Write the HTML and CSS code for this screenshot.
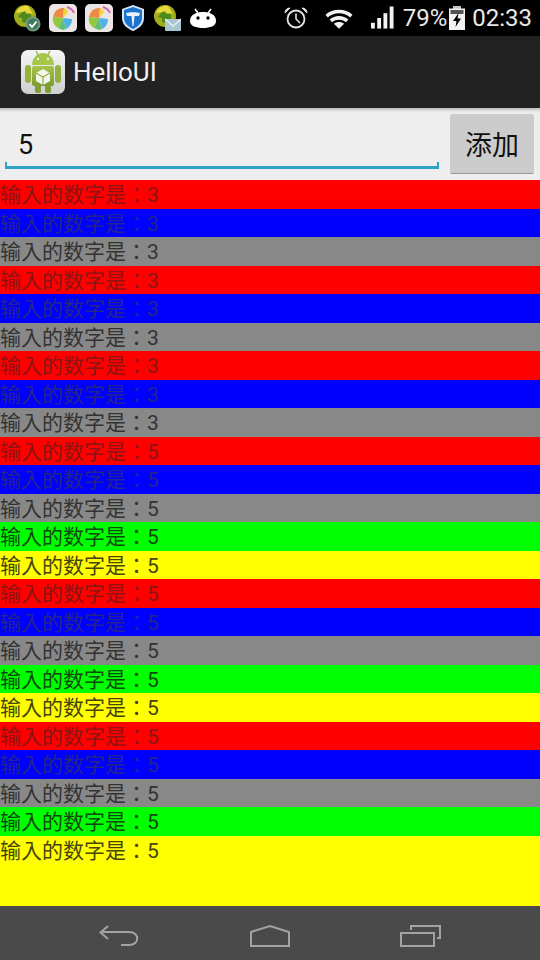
FILE: index.html
```html
<!DOCTYPE html>
<html>
<head>
	<title>HelloUI</title>
	<link rel="stylesheet" href="styles.css">
</head>
<body>
	<div class="status">
		<div class="status-left">
			<svg class="note" width="28" height="28" viewBox="0 0 28 28">
				<circle cx="12" cy="12" r="11" fill="#a2ad1e"/>
				<path d="M3 9 C5 3 11 1 15 2 L20 10 L10 8 Z" fill="#e9d83a"/>
				<path d="M8 9 L12 7 L13 10 L18 10 L18 15 L14 15 L13 19 L9 18 L9 14 L5 13 Z" fill="#4d8a1c"/>
				<circle cx="20" cy="20" r="7.5" fill="#6f9a80"/>
				<circle cx="20" cy="20" r="5.5" fill="#3f7a5c"/>
				<path d="M16.5 20 L19 23 L23.5 17.5" fill="none" stroke="#fff" stroke-width="1.8"/>
			</svg>
			<svg class="note" width="28" height="28" viewBox="0 0 28 28">
				<rect width="28" height="28" rx="5" fill="#ebe6e4"/>
				<path d="M4 13 A10 10 0 0 1 15 4 L14 14 Z" fill="#ee8a45"/>
				<path d="M15 4 C18 5 19 7 19 8 L14 14 Z" fill="#f2d33c"/>
				<path d="M4 13 L14 14 L9 24 A10 10 0 0 1 4 13 Z" fill="#93c83e"/>
				<path d="M14 14 L9 24 L14 26 L17 25 Z" fill="#63bf78"/>
				<path d="M14 14 L17 25 C21 23 23 19 23 15 Z" fill="#4db3e6"/>
				<path d="M18 3 C21 4 24 6 25 9" fill="none" stroke="#d668b4" stroke-width="2"/>
			</svg>
			<svg class="note" width="28" height="28" viewBox="0 0 28 28">
				<rect width="28" height="28" rx="5" fill="#ebe6e4"/>
				<path d="M4 13 A10 10 0 0 1 15 4 L14 14 Z" fill="#ee8a45"/>
				<path d="M15 4 C18 5 19 7 19 8 L14 14 Z" fill="#f2d33c"/>
				<path d="M4 13 L14 14 L9 24 A10 10 0 0 1 4 13 Z" fill="#93c83e"/>
				<path d="M14 14 L9 24 L14 26 L17 25 Z" fill="#63bf78"/>
				<path d="M14 14 L17 25 C21 23 23 19 23 15 Z" fill="#4db3e6"/>
				<path d="M18 3 C21 4 24 6 25 9" fill="none" stroke="#d668b4" stroke-width="2"/>
			</svg>
			<svg class="note" width="24" height="28" viewBox="0 0 24 28">
				<path d="M12 1 L23 5 L23 14 C23 21 17 25 12 27 C7 25 1 21 1 14 L1 5 Z" fill="#d5e6f5"/>
				<path d="M12 3 L21 6 L21 14 C21 20 16 23 12 25 C8 23 3 20 3 14 L3 6 Z" fill="#1c74d0"/>
				<path d="M5 9 C9 8 15 8 19 9 L18 12 L13.5 12 L12.5 22 L11.5 22 L10.5 12 L6 12 Z" fill="#e8f2fb"/>
			</svg>
			<svg class="note" width="28" height="28" viewBox="0 0 28 28">
				<circle cx="12" cy="12" r="11" fill="#a2ad1e"/>
				<path d="M3 9 C5 3 11 1 15 2 L20 10 L10 8 Z" fill="#e9d83a"/>
				<path d="M8 9 L12 7 L13 10 L18 10 L18 15 L14 15 L13 19 L9 18 L9 14 L5 13 Z" fill="#4d8a1c"/>
				<rect x="12" y="15" width="16" height="12" rx="1" fill="#a9c6d2"/>
				<path d="M12 15 L20 22 L28 15" fill="none" stroke="#e6eef2" stroke-width="1.4"/>
			</svg>
			<svg class="note" width="28" height="28" viewBox="0 0 28 28">
				<path d="M6 5 L9 9 M22 5 L19 9" stroke="#fff" stroke-width="1.6"/>
				<path d="M1 17 C1 10 8 8 14 8 C20 8 27 10 27 17 C27 22 21 24 14 24 C7 24 1 22 1 17 Z" fill="#fff"/>
				<circle cx="9" cy="14" r="1.7" fill="#000"/>
				<circle cx="19" cy="14" r="1.7" fill="#000"/>
			</svg>
		</div>
		<div class="status-right">
			<svg class="alarm" width="26" height="24" viewBox="0 0 26 24" fill="none" stroke="#e4e4e4">
				<circle cx="13" cy="13" r="8.5" stroke-width="1.8"/>
				<path d="M13 7.5 L13 13 L17 17" stroke-width="1.6"/>
				<path d="M2 7 C2 4 4 2 7 2 Z M24 7 C24 4 22 2 19 2 Z" fill="#e4e4e4" stroke-width="1"/>
			</svg>
			<svg class="wifi" width="28" height="21" viewBox="0 0 30 22">
				<path d="M0.5 7 C8 0 22 0 29.5 7 L27 10 C20 4 10 4 3 10 Z" fill="#f2f2f2"/>
				<path d="M5 12 C10 7 20 7 25 12 L22.5 15 C18.5 11.5 11.5 11.5 7.5 15 Z" fill="#f2f2f2"/>
				<path d="M9.5 16.5 C12.5 14 17.5 14 20.5 16.5 L15 22 Z" fill="#f2f2f2"/>
			</svg>
			<svg class="signal" width="23" height="24" viewBox="0 0 24 24">
				<rect x="0" y="17" width="4" height="6" fill="#f2f2f2"/>
				<rect x="6.5" y="12" width="4" height="11" fill="#f2f2f2"/>
				<rect x="13" y="7" width="4" height="16" fill="#f2f2f2"/>
				<rect x="19.5" y="0" width="4" height="23" fill="#f2f2f2"/>
			</svg>
			<span class="battery-pct">79%</span>
			<svg class="battery" width="16" height="24" viewBox="0 0 16 24">
				<rect x="4" y="0" width="8" height="3" fill="#c4c4c4"/>
				<rect x="0" y="2.5" width="16" height="21.5" fill="#f2f2f2"/>
				<rect x="1.5" y="4" width="13" height="4" fill="#555"/>
				<path d="M9.5 7 L4 15 L7.5 15 L6.5 21 L12 12.5 L8.5 12.5 Z" fill="#000"/>
			</svg>
			<span class="clock">02:33</span>
		</div>
	</div>

	<div class="actionbar">
		<svg class="app-icon" width="44" height="44" viewBox="0 0 44 44">
			<defs>
				<linearGradient id="tile" x1="0" y1="0" x2="0" y2="1">
					<stop offset="0" stop-color="#f6f6f6"/>
					<stop offset="1" stop-color="#cfcfcf"/>
				</linearGradient>
				<linearGradient id="robot" x1="0" y1="0" x2="0" y2="1">
					<stop offset="0" stop-color="#a6c64a"/>
					<stop offset="1" stop-color="#7d9c30"/>
				</linearGradient>
			</defs>
			<rect width="44" height="44" rx="7" fill="url(#tile)"/>
			<path d="M15 1 L18 6 M29 1 L26 6" stroke="#93b33e" stroke-width="1.4"/>
			<path d="M11 15 C11 8 16 3 22 3 C28 3 33 8 33 15 Z" fill="#a6c64a"/>
			<circle cx="17" cy="9" r="1.2" fill="#eee"/>
			<circle cx="27" cy="9" r="1.2" fill="#eee"/>
			<rect x="11" y="16" width="22" height="20" rx="2" fill="url(#robot)"/>
			<rect x="4" y="15" width="6" height="18" rx="3" fill="#93b33e"/>
			<rect x="34" y="15" width="6" height="18" rx="3" fill="#93b33e"/>
			<rect x="14" y="35" width="6" height="8" rx="2" fill="#7f9e34"/>
			<rect x="24" y="35" width="6" height="8" rx="2" fill="#7f9e34"/>
			<path d="M22 19 L29 23 L29 31 L22 35 L15 31 L15 23 Z" fill="#f5f5f0"/>
			<path d="M15 23 L22 27 L29 23 M22 27 L22 35" fill="none" stroke="#93b33e" stroke-width="1.2"/>
		</svg>
		<span class="app-title">HelloUI</span>
	</div>

	<div class="form">
		<div class="edit">5</div>
		<div class="add-btn">添加</div>
	</div>

	<div class="list">
		<div class="row red">输入的数字是：3</div>
		<div class="row blue">输入的数字是：3</div>
		<div class="row gray">输入的数字是：3</div>
		<div class="row red">输入的数字是：3</div>
		<div class="row blue">输入的数字是：3</div>
		<div class="row gray">输入的数字是：3</div>
		<div class="row red">输入的数字是：3</div>
		<div class="row blue">输入的数字是：3</div>
		<div class="row gray">输入的数字是：3</div>
		<div class="row red">输入的数字是：5</div>
		<div class="row blue">输入的数字是：5</div>
		<div class="row gray">输入的数字是：5</div>
		<div class="row green">输入的数字是：5</div>
		<div class="row yellow">输入的数字是：5</div>
		<div class="row red">输入的数字是：5</div>
		<div class="row blue">输入的数字是：5</div>
		<div class="row gray">输入的数字是：5</div>
		<div class="row green">输入的数字是：5</div>
		<div class="row yellow">输入的数字是：5</div>
		<div class="row red">输入的数字是：5</div>
		<div class="row blue">输入的数字是：5</div>
		<div class="row gray">输入的数字是：5</div>
		<div class="row green">输入的数字是：5</div>
		<div class="row yellow last">输入的数字是：5</div>
	</div>

	<div class="navbar">
		<svg width="42" height="30" viewBox="0 0 42 30" fill="none" stroke="#a3a3a3" stroke-width="2">
			<path d="M2.5 14 L31 14 C42 14 42 27 31 27 L23 27"/>
			<path d="M10 8 L2.5 14.5 L10 21"/>
		</svg>
		<svg width="42" height="30" viewBox="0 0 42 30" fill="none" stroke="#a3a3a3" stroke-width="2">
			<path d="M2 14 L21 8 L40 14 L40 28 L2 28 Z"/>
		</svg>
		<svg width="42" height="30" viewBox="0 0 42 30" fill="none" stroke="#a3a3a3" stroke-width="2">
			<rect x="1" y="15" width="33" height="13"/>
			<path d="M11 12 L11 8 L40 8 L40 20 L37 20"/>
		</svg>
	</div>
</body>
</html>
```

FILE: styles.css
```css
* {
	box-sizing: border-box;
}

html, body {
	margin: 0;
	padding: 0;
}

body {
	width: 540px;
	height: 960px;
	display: flex;
	flex-direction: column;
	overflow: hidden;
	font-family: Roboto, "Noto Sans CJK TC", sans-serif;
}

.status {
	height: 36px;
	flex: none;
	background: #000;
	display: flex;
	justify-content: space-between;
	align-items: center;
	padding: 0 8px 0 13px;
}

.status-left {
	display: flex;
	align-items: center;
	gap: 8px;
}

.status-right {
	display: flex;
	align-items: center;
	color: #e8e8e8;
	font-size: 24px;
}

.alarm {
	margin-right: 16px;
}

.wifi {
	margin-right: 18px;
}

.signal {
	margin-right: 9px;
}

.battery {
	margin: 0 7px 0 2px;
}

.actionbar {
	height: 72px;
	flex: none;
	background: #222;
	display: flex;
	align-items: center;
	padding-left: 21px;
	gap: 8px;
}

.app-title {
	color: #f0f0f0;
	font-size: 26px;
}

.form {
	height: 72px;
	flex: none;
	background: #eee;
	display: flex;
	align-items: flex-start;
	padding: 6px 6px 0 5px;
	gap: 11px;
	box-shadow: inset 0 4px 3px -2px #bbb;
}

.edit {
	flex: 1;
	height: 55px;
	padding: 15px 0 0 13px;
	font-size: 27px;
	line-height: 32px;
	color: #111;
	background:
		linear-gradient(#2ba2c6, #2ba2c6) left bottom / 100% 3px no-repeat,
		linear-gradient(#2ba2c6, #2ba2c6) left bottom / 2px 7px no-repeat,
		linear-gradient(#2ba2c6, #2ba2c6) right bottom / 2px 7px no-repeat;
}

.add-btn {
	width: 84px;
	height: 60px;
	background: #ccc;
	border-bottom: 1px solid #999;
	border-radius: 2px;
	font-size: 27px;
	color: #111;
	display: flex;
	align-items: center;
	justify-content: center;
}

.list {
	flex: 1;
	display: flex;
	flex-direction: column;
	min-height: 0;
}

.row {
	height: 28.5px;
	flex: none;
	font-size: 21px;
	line-height: 30px;
	white-space: nowrap;
}

.row.last {
	flex: 1;
}

.red {
	background: #f00;
	color: #8c1414;
}

.blue {
	background: #00f;
	color: #24248e;
}

.gray {
	background: #888;
	color: #333;
}

.green {
	background: #0f0;
	color: #0c4a0c;
}

.yellow {
	background: #ff0;
	color: #45450c;
}

.navbar {
	height: 54px;
	flex: none;
	background: #4a4a4a;
	display: flex;
	align-items: center;
	justify-content: space-around;
	padding: 0 44px;
}
```
